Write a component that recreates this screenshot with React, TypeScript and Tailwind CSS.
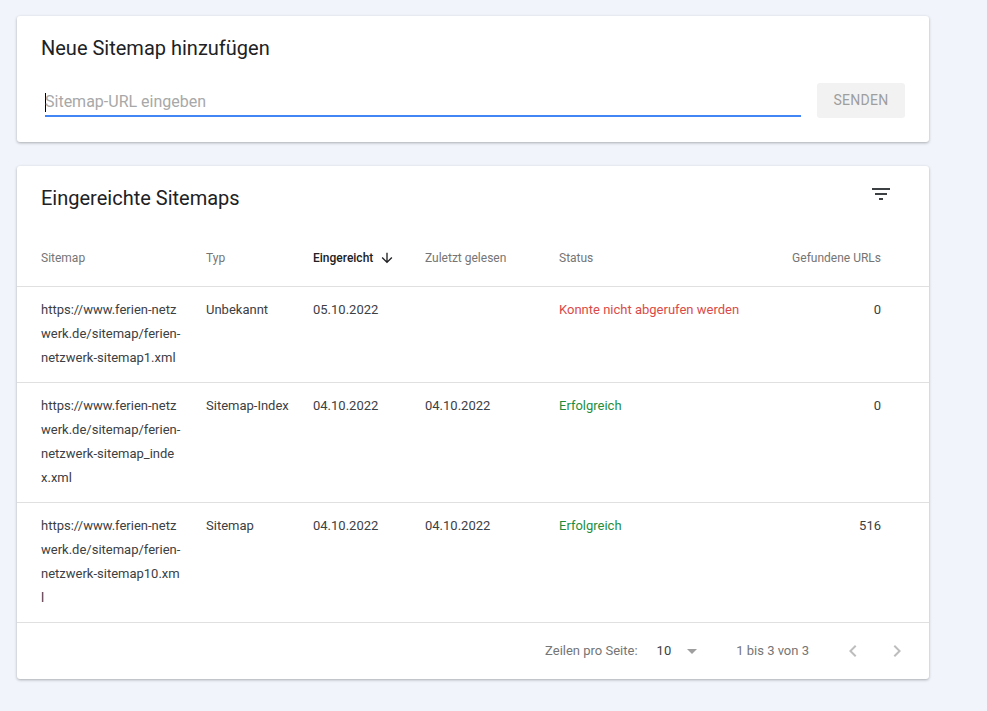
import React from 'react';

type Row = {
  url: string;
  typ: string;
  submitted: string;
  lastRead: string;
  status: string;
  ok: boolean;
  urls: string;
};

const rows: Row[] = [
  {
    url: 'https://www.ferien-netzwerk.de/sitemap/ferien-netzwerk-sitemap1.xml',
    typ: 'Unbekannt',
    submitted: '05.10.2022',
    lastRead: '',
    status: 'Konnte nicht abgerufen werden',
    ok: false,
    urls: '0',
  },
  {
    url: 'https://www.ferien-netzwerk.de/sitemap/ferien-netzwerk-sitemap_index.xml',
    typ: 'Sitemap-Index',
    submitted: '04.10.2022',
    lastRead: '04.10.2022',
    status: 'Erfolgreich',
    ok: true,
    urls: '0',
  },
  {
    url: 'https://www.ferien-netzwerk.de/sitemap/ferien-netzwerk-sitemap10.xml',
    typ: 'Sitemap',
    submitted: '04.10.2022',
    lastRead: '04.10.2022',
    status: 'Erfolgreich',
    ok: true,
    urls: '516',
  },
];

function FilterIcon() {
  return (
    <svg width="24" height="24" viewBox="0 0 24 24" fill="#3c4043">
      <path d="M10 18h4v-2h-4v2zM3 6v2h18V6H3zm3 7h12v-2H6v2z" />
    </svg>
  );
}

export default function App() {
  return (
    <div
      className="min-h-[711px] bg-[#f1f4fb] pt-4 pl-[17px] w-[987px]"
      style={{ fontFamily: 'Roboto, "Liberation Sans", sans-serif' }}
    >
      {/* Add sitemap card */}
      <div className="w-[912px] bg-white rounded-[3px] shadow-[0_1px_3px_rgba(0,0,0,0.3)] px-6 pt-[21px] pb-[25px]">
        <h2 className="text-[20px] leading-[22px] text-[#202124]">Neue Sitemap hinzufügen</h2>
        <div className="flex items-end mt-[22px] pl-1">
          <div className="flex-1 border-b-2 border-[#4285f4] h-[36px] flex items-end pb-[3px]">
            <span className="w-px h-[19px] bg-black mr-[-1px]" />
            <span className="text-[16px] leading-[20px] text-[#a8a8a8]">Sitemap-URL eingeben</span>
          </div>
          <button className="ml-4 w-[88px] h-[35px] mb-[-1px] rounded-[3px] bg-[#f2f2f2] text-[14px] text-[#9e9e9e] tracking-[0.3px]">
            SENDEN
          </button>
        </div>
      </div>

      {/* Submitted sitemaps card */}
      <div className="w-[912px] mt-6 bg-white rounded-[3px] shadow-[0_1px_3px_rgba(0,0,0,0.3)]">
        <div className="flex items-center justify-between pl-6 pr-[36px] pt-[19px]">
          <h2 className="text-[20px] leading-[26px] text-[#202124]">Eingereichte Sitemaps</h2>
          <div className="-mt-2">
            <FilterIcon />
          </div>
        </div>

        <div className="mt-[18px] flex items-center h-[58px] border-b border-[#e0e0e0] text-[12px] text-[#757575]">
          <div className="w-[189px] pl-6">Sitemap</div>
          <div className="w-[107px]">Typ</div>
          <div className="w-[112px] flex items-center text-[#202124] font-medium">
            Eingereicht
            <svg className="ml-[6px]" width="16" height="16" viewBox="0 0 24 24" fill="#202124">
              <path d="M20 12l-1.41-1.41L13 16.17V4h-2v12.17l-5.58-5.59L4 12l8 8 8-8z" />
            </svg>
          </div>
          <div className="w-[134px]">Zuletzt gelesen</div>
          <div className="w-[180px]">Status</div>
          <div className="w-[142px] text-right">Gefundene URLs</div>
        </div>

        {rows.map((r, i) => (
          <div key={i} className="flex items-start pt-[11px] pb-3 border-b border-[#e0e0e0] text-[13px] leading-[24px] text-[#3c4043]">
            <div className="w-[189px] pl-6 pr-[8px]">
              <div className="w-[141px] break-all">{r.url}</div>
            </div>
            <div className="w-[107px]">{r.typ}</div>
            <div className="w-[112px]">{r.submitted}</div>
            <div className="w-[134px]">{r.lastRead}</div>
            <div className={'w-[180px] whitespace-nowrap ' + (r.ok ? 'text-[#1e8e3e]' : 'text-[#db4a48]')}>{r.status}</div>
            <div className="w-[142px] text-right">{r.urls}</div>
          </div>
        ))}

        <div className="h-[56px] flex items-center justify-end pr-[20px] text-[13px] text-[#757575]">
          <span>Zeilen pro Seite:</span>
          <span className="ml-[19px] text-[#3c4043]">10</span>
          <svg className="ml-4" width="10" height="5" viewBox="0 0 10 5" fill="#9e9e9e">
            <path d="M0 0l5 5 5-5z" />
          </svg>
          <span className="ml-[39px]">1 bis 3 von 3</span>
          <svg className="ml-[32px]" width="24" height="24" viewBox="0 0 24 24" fill="#bdbdbd">
            <path d="M15.41 7.41L14 6l-6 6 6 6 1.41-1.41L10.83 12z" />
          </svg>
          <svg className="ml-5" width="24" height="24" viewBox="0 0 24 24" fill="#bdbdbd">
            <path d="M10 6L8.59 7.41 13.17 12l-4.58 4.59L10 18l6-6z" />
          </svg>
        </div>
      </div>
    </div>
  );
}
